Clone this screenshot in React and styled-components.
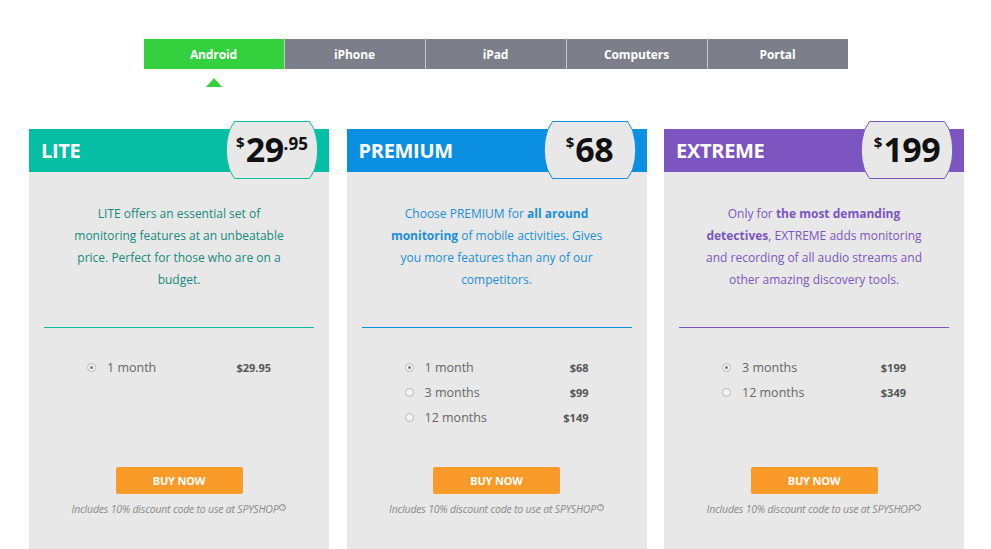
import React from "react";
import styled, { createGlobalStyle } from "styled-components";

const Global = createGlobalStyle`
  html, body { margin: 0; padding: 0; background: #fff; }
  body { font-family: "Open Sans", "Noto Sans", sans-serif; }
  * { box-sizing: border-box; }
`;

const Page = styled.div`
  width: 991px;
  height: 549px;
  overflow: hidden;
  padding-top: 39px;
  display: flex;
  flex-direction: column;
  align-items: center;
`;

const Tabs = styled.div`
  display: flex;
  gap: 1px;
  background: #c9cbd0;
`;

const Tab = styled.div`
  position: relative;
  width: 140px;
  height: 30px;
  display: flex;
  align-items: center;
  justify-content: center;
  background: ${(p) => (p.$active ? "#34d03e" : "#7c7f89")};
  color: #fff;
  font-weight: 700;
  font-size: 12px;
  letter-spacing: -0.1px;
  &::after {
    content: "";
    display: ${(p) => (p.$active ? "block" : "none")};
    position: absolute;
    left: 50%;
    top: 39px;
    margin-left: -8px;
    border-left: 8px solid transparent;
    border-right: 8px solid transparent;
    border-bottom: 9px solid #34d03e;
  }
`;

const Cards = styled.div`
  margin-top: 60px;
  margin-left: 2px;
  display: flex;
  gap: 17.5px;
`;

const Card = styled.div`
  width: 300px;
  height: 420px;
  background: #e8e8e8;
  display: flex;
  flex-direction: column;
  position: relative;
`;

const Header = styled.div`
  height: 43px;
  background: ${(p) => p.$color};
  display: flex;
  align-items: center;
  padding-left: 12px;
  color: #fff;
  font-weight: 700;
  font-size: 20px;
  letter-spacing: -0.3px;
`;

const Badge = styled.div`
  position: absolute;
  right: 9px;
  top: -8px;
  width: 96px;
  height: 58px;
  display: flex;
  align-items: center;
  justify-content: center;
  color: #111;
  svg { position: absolute; inset: 0; }
`;

const PriceWrap = styled.div`
  position: relative;
  display: flex;
  align-items: flex-start;
  font-weight: 700;
  line-height: 1;
  margin-top: -2px;
`;

const Cur = styled.span`
  font-size: 15px;
  margin-top: 3px;
  margin-right: 1px;
`;

const Big = styled.span`
  font-size: 34px;
  letter-spacing: -0.5px;
`;

const Cents = styled.span`
  font-size: 17px;
  margin-top: 3px;
`;

const Desc = styled.p`
  margin: 0;
  height: 155px;
  padding-top: 31px;
  text-align: center;
  font-size: 12px;
  line-height: 22px;
  color: ${(p) => p.$color};
  b { font-weight: 700; }
`;

const Divider = styled.div`
  height: 1px;
  margin: 0 15px;
  background: ${(p) => p.$color};
`;

const Options = styled.div`
  height: 139px;
  padding: 27px 58px 0 58px;
  display: flex;
  flex-direction: column;
`;

const Row = styled.div`
  height: 25px;
  display: flex;
  align-items: center;
`;

const Radio = styled.span`
  width: 9px;
  height: 9px;
  border-radius: 50%;
  border: 1px solid #b8b8b8;
  background: #f4f4f4;
  display: flex;
  align-items: center;
  justify-content: center;
  margin-right: 11px;
  &::after {
    content: "";
    width: 3px;
    height: 3px;
    border-radius: 50%;
    background: #7a7a7a;
    display: ${(p) => (p.$checked ? "block" : "none")};
  }
`;

const Label = styled.span`
  flex: 1;
  font-size: 12.5px;
  color: #666;
`;

const Amount = styled.span`
  font-size: 11px;
  font-weight: 700;
  color: #555;
`;

const Footer = styled.div`
  display: flex;
  flex-direction: column;
  align-items: center;
`;

const Buy = styled.button`
  width: 127px;
  height: 27px;
  border: none;
  border-radius: 2px;
  background: #fa9a28;
  color: #fff;
  font-family: inherit;
  font-weight: 700;
  font-size: 11px;
  letter-spacing: -0.2px;
  padding: 0;
`;

const Note = styled.div`
  margin-top: 8px;
  font-size: 10.5px;
  font-style: italic;
  color: #8a8a8a;
  letter-spacing: -0.2px;
`;

const Help = styled.sup`
  display: inline-flex;
  align-items: center;
  justify-content: center;
  width: 7px;
  height: 7px;
  border: 1px solid #8a8a8a;
  border-radius: 50%;
  font-size: 5px;
  font-style: normal;
  margin-left: 1px;
  vertical-align: 4px;
  line-height: 1;
`;

const BadgeShape = ({ color }) => (
  <svg width="96" height="58" viewBox="0 0 96 58">
    <path
      d="M10.5 0.5 H85.5 L90.5 9 Q97 29 90.5 49 L85.5 57.5 H10.5 L5.5 49 Q-1 29 5.5 9 Z"
      fill="#e8e8e8"
      stroke={color}
      strokeWidth="1"
    />
  </svg>
);

const plans = [
  {
    name: "LITE",
    color: "#05bea4",
    text: "#168a7c",
    price: "29",
    cents: ".95",
    desc: (
      <>
        LITE offers an essential set of
        <br />
        monitoring features at an unbeatable
        <br />
        price. Perfect for those who are on a
        <br />
        budget.
      </>
    ),
    options: [["1 month", "$29.95", true]],
  },
  {
    name: "PREMIUM",
    color: "#0a8fe3",
    text: "#1b8fd9",
    price: "68",
    desc: (
      <>
        Choose PREMIUM for <b>all around</b>
        <br />
        <b>monitoring</b> of mobile activities. Gives
        <br />
        you more features than any of our
        <br />
        competitors.
      </>
    ),
    options: [
      ["1 month", "$68", true],
      ["3 months", "$99"],
      ["12 months", "$149"],
    ],
  },
  {
    name: "EXTREME",
    color: "#7c55c1",
    text: "#7b56c0",
    price: "199",
    desc: (
      <>
        Only for <b>the most demanding</b>
        <br />
        <b>detectives</b>, EXTREME adds monitoring
        <br />
        and recording of all audio streams and
        <br />
        other amazing discovery tools.
      </>
    ),
    options: [
      ["3 months", "$199", true],
      ["12 months", "$349"],
    ],
  },
];

const tabs = ["Android", "iPhone", "iPad", "Computers", "Portal"];

export default function App() {
  return (
    <>
      <Global />
      <Page>
        <Tabs>
          {tabs.map((t, i) => (
            <Tab key={t} $active={i === 0}>
              {t}
            </Tab>
          ))}
        </Tabs>
        <Cards>
          {plans.map((p) => (
            <Card key={p.name}>
              <Header $color={p.color}>{p.name}</Header>
              <Badge>
                <BadgeShape color={p.color} />
                <PriceWrap>
                  <Cur>$</Cur>
                  <Big>{p.price}</Big>
                  {p.cents && <Cents>{p.cents}</Cents>}
                </PriceWrap>
              </Badge>
              <Desc $color={p.text}>{p.desc}</Desc>
              <Divider $color={p.color} />
              <Options>
                {p.options.map(([l, a, c]) => (
                  <Row key={l}>
                    <Radio $checked={c} />
                    <Label>{l}</Label>
                    <Amount>{a}</Amount>
                  </Row>
                ))}
              </Options>
              <Footer>
                <Buy>BUY NOW</Buy>
                <Note>
                  Includes 10% discount code to use at SPYSHOP<Help>?</Help>
                </Note>
              </Footer>
            </Card>
          ))}
        </Cards>
      </Page>
    </>
  );
}
